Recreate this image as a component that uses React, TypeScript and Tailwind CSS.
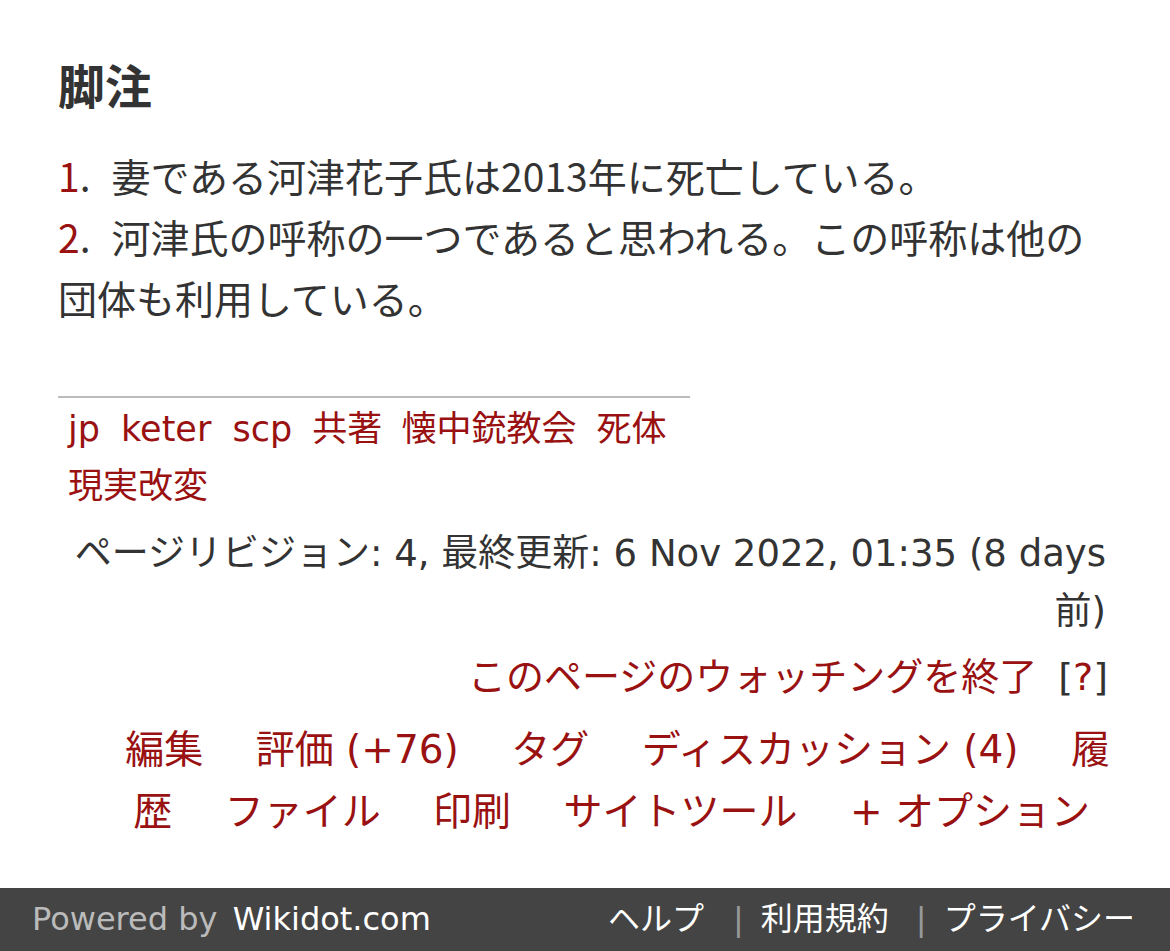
import React from "react";

const RED = "text-[#991111]";

export default function App() {
  return (
    <div className="w-[1170px] h-[951px] bg-white flex flex-col overflow-hidden text-[#333]">
      <div className="pl-[58px] pr-[58px] pt-[56px]">
        <h1 className="font-['Noto_Sans_CJK_JP',sans-serif] font-bold text-[47px] leading-[56px] text-[#333]">
          脚注
        </h1>

        <div className="mt-[33px] font-['Noto_Sans_CJK_JP',sans-serif] text-[39px] leading-[61px]">
          <div>
            <span className={RED}>1</span>.
            <span className="ml-[21px]">妻である河津花子氏は2013年に死亡している。</span>
          </div>
          <div>
            <span className={RED}>2</span>.
            <span className="ml-[21px]">河津氏の呼称の一つであると思われる。この呼称は他の団体も利用している。</span>
          </div>
        </div>

        <div className="mt-[68px] w-[632px] border-t-2 border-[#bbbbbb]" />

        <div className="mt-[3px] w-[632px] pl-[5px] font-['DejaVu_Sans','Noto_Sans_CJK_JP',sans-serif] text-[35px] leading-[57px]">
          <span className={`${RED} mx-[5px]`}>jp</span>{" "}
          <span className={`${RED} mx-[5px]`}>keter</span>{" "}
          <span className={`${RED} mx-[5px]`}>scp</span>{" "}
          <span className={`${RED} mx-[4px]`}>共著</span>{" "}
          <span className={`${RED} mx-[4px]`}>懐中銃教会</span>{" "}
          <span className={`${RED} mx-[5px]`}>死体</span>{" "}
          <span className={`${RED} mx-[5px]`}>現実改変</span>
        </div>

        <div className="mt-[10px] pr-[6px] text-right font-['DejaVu_Sans','Noto_Sans_CJK_JP',sans-serif] text-[37px] leading-[58px] text-[#333]">
          ページリビジョン: 4, 最終更新: 6 Nov 2022, 01:35 (8 days 前)
        </div>

        <div className="mt-[7px] pr-[4px] text-right font-['DejaVu_Sans','Noto_Sans_CJK_JP',sans-serif] text-[38px] leading-[58px] text-[#333]">
          <span className={RED}>このページのウォッチングを終了</span>
          <span className="ml-[21px]">
            [<span className={RED}>?</span>]
          </span>
        </div>

        <div className="mt-[13px] pr-[2px] text-right font-['DejaVu_Sans','Noto_Sans_CJK_JP',sans-serif] text-[39px] leading-[62px]">
          <span className={`${RED} mx-[20px]`}>編集</span>{" "}
          <span className={`${RED} mx-[20px]`}>評価 (+76)</span>{" "}
          <span className={`${RED} mx-[20px]`}>タグ</span>{" "}
          <span className={`${RED} mx-[20px]`}>ディスカッション (4)</span>{" "}
          <span className={`${RED} mx-[20px]`}>履歴</span>{" "}
          <span className={`${RED} mx-[20px]`}>ファイル</span>{" "}
          <span className={`${RED} mx-[20px]`}>印刷</span>{" "}
          <span className={`${RED} mx-[20px]`}>サイトツール</span>{" "}
          <span className={`${RED} mx-[20px]`}>+ オプション</span>
        </div>
      </div>

      <div className="mt-auto h-[63px] bg-[#444444] flex items-center justify-between pl-[32px] pr-[35px] font-['DejaVu_Sans','Noto_Sans_CJK_JP',sans-serif] text-[32px] leading-[63px]">
        <div>
          <span className="text-[#bbbbbb]">Powered by</span>{" "}
          <span className="text-white ml-[5px]">Wikidot.com</span>
        </div>
        <div className="flex items-center">
          <span className="text-white">ヘルプ</span>
          <span className="text-[#999999] ml-[29px] mr-[17px]">|</span>
          <span className="text-white">利用規約</span>
          <span className="text-[#999999] ml-[27px] mr-[17px]">|</span>
          <span className="text-white">プライバシー</span>
        </div>
      </div>
    </div>
  );
}
